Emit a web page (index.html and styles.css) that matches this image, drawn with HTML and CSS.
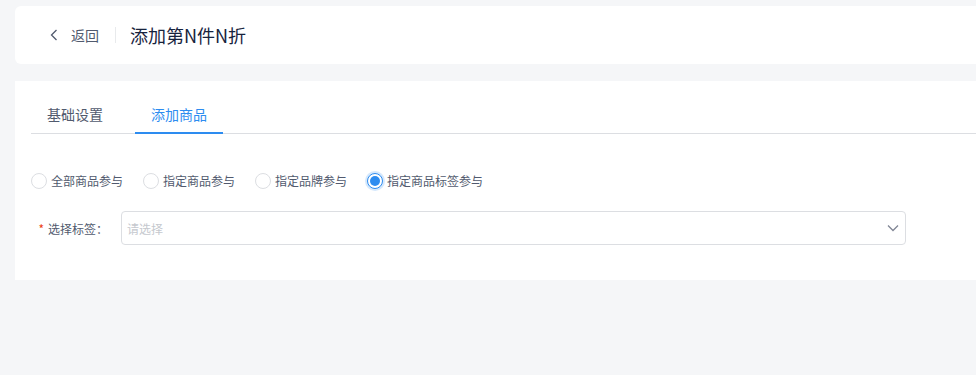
FILE: index.html
```html
<!DOCTYPE html>
<html lang="zh-CN">
<head>
<meta charset="utf-8">
<link rel="stylesheet" href="styles.css">
</head>
<body>
<div class="page">
  <div class="card header">
    <a class="back">
      <svg class="back-icon" width="8" height="12" viewBox="0 0 8 12"><path d="M6.5 1 L1.5 6 L6.5 11" fill="none" stroke="#515a6e" stroke-width="1.3"/></svg>
      <span>返回</span>
    </a>
    <span class="divider"></span>
    <h1 class="title">添加第N件N折</h1>
  </div>
  <div class="card main">
    <div class="tabs">
      <div class="tab">基础设置</div>
      <div class="tab active">添加商品</div>
    </div>
    <div class="radios">
      <label class="radio"><span class="circle"></span><span>全部商品参与</span></label>
      <label class="radio"><span class="circle"></span><span>指定商品参与</span></label>
      <label class="radio"><span class="circle"></span><span>指定品牌参与</span></label>
      <label class="radio checked"><span class="circle"></span><span>指定商品标签参与</span></label>
    </div>
    <div class="form-row">
      <div class="label"><span class="req">*</span>选择标签：</div>
      <div class="select">
        <span class="placeholder">请选择</span>
        <svg class="arrow" width="12" height="8" viewBox="0 0 12 8"><path d="M1 1.5 L6 6.5 L11 1.5" fill="none" stroke="#808695" stroke-width="1.3"/></svg>
      </div>
    </div>
  </div>
</div>
</body>
</html>
```
FILE: styles.css
```css
* { box-sizing: border-box; }
html, body { margin: 0; padding: 0; }
body {
  background: #f5f6f8;
  font-family: "Noto Sans CJK SC", "Noto Sans", sans-serif;
  color: #515a6e;
  width: 976px;
  height: 375px;
  overflow: hidden;
}
.page {
  padding: 6px 0 0 15px;
  display: flex;
  flex-direction: column;
  gap: 17px;
}
.card {
  background: #fff;
  width: 980px;
}
.header {
  height: 58px;
  border-radius: 6px 0 0 6px;
  display: flex;
  align-items: center;
  padding-left: 35px;
}
.back {
  display: flex;
  align-items: center;
  gap: 13px;
  font-size: 14px;
  color: #515a6e;
}
.back-icon { display: block; }
.divider {
  width: 1px;
  height: 16px;
  background: #e8eaec;
  margin: 0 15px 0 16px;
}
.title {
  margin: 0;
  font-size: 18px;
  font-weight: 400;
  color: #17233d;
  position: relative;
  left: -1px;
}
.main {
  height: 199px;
  padding: 14px 0 0 16px;
}
.tabs {
  display: flex;
  gap: 16px;
  border-bottom: 1px solid #dcdee2;
}
.tab {
  padding: 9px 16px 7px;
  font-size: 14px;
  line-height: 21px;
  color: #515a6e;
  border-bottom: 2px solid transparent;
  margin-bottom: -1px;
}
.tab.active {
  color: #2d8cf0;
  border-bottom-color: #2d8cf0;
}
.radios {
  display: flex;
  gap: 20px;
  margin-top: 38px;
}
.radio {
  display: flex;
  align-items: center;
  gap: 4px;
  font-size: 12px;
  line-height: 18px;
  color: #515a6e;
}
.circle {
  width: 16px;
  height: 16px;
  border: 1px solid #dcdee2;
  border-radius: 50%;
  background: #fff;
  position: relative;
}
.radio.checked .circle {
  border-color: #2d8cf0;
  box-shadow: 0 0 0 2px rgba(45, 140, 240, 0.2);
}
.radio.checked .circle::after {
  content: "";
  position: absolute;
  left: 2px;
  top: 2px;
  width: 10px;
  height: 10px;
  border-radius: 50%;
  background: #2d8cf0;
}
.form-row {
  display: flex;
  align-items: center;
  margin-top: 21px;
}
.label {
  width: 90px;
  padding-right: 13px;
  text-align: right;
  font-size: 12px;
  color: #515a6e;
  white-space: nowrap;
}
.req {
  color: #ed4014;
  margin-right: 4px;
}
.select {
  width: 785px;
  height: 34px;
  border: 1px solid #dcdee2;
  border-radius: 4px;
  display: flex;
  align-items: center;
  justify-content: space-between;
  padding: 0 6px 0 5px;
}
.placeholder {
  font-size: 12px;
  color: #c5c8ce;
}
.arrow { display: block; }
```
